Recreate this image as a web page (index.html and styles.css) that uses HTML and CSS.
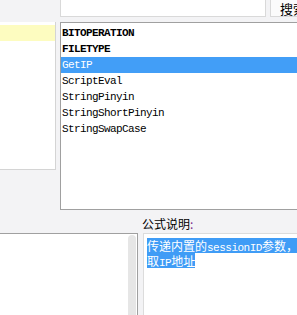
FILE: index.html
```html
<!DOCTYPE html>
<html>
<head>
<meta charset="utf-8">
<link rel="stylesheet" href="styles.css">
</head>
<body>
<div class="page">
  <div class="top">
    <div class="search-input"></div>
    <div class="search-btn">搜索</div>
  </div>
  <div class="mid">
    <div class="cat-panel">
      <div class="cat-row selected"></div>
    </div>
    <div class="func-list">
      <div class="item bold">BITOPERATION</div>
      <div class="item bold">FILETYPE</div>
      <div class="item active">GetIP</div>
      <div class="item">ScriptEval</div>
      <div class="item">StringPinyin</div>
      <div class="item">StringShortPinyin</div>
      <div class="item">StringSwapCase</div>
    </div>
  </div>
  <div class="label-row">
    <span class="label">公式说明<span class="colon">:</span></span>
  </div>
  <div class="bottom">
    <div class="editor">
      <div class="scroll-thumb"></div>
    </div>
    <div class="desc">
      <div class="sel">传递内置的<span class="mono">sessionID</span>参数，</div>
      <div class="sel">取<span class="mono">IP</span>地址</div>
    </div>
  </div>
</div>
</body>
</html>
```
FILE: styles.css
```css
html, body {
  margin: 0;
  padding: 0;
}
body {
  background: #f3f3f5;
  width: 297px;
  height: 315px;
  overflow: hidden;
  font-family: "Noto Sans CJK SC", sans-serif;
}
.page {
  display: flex;
  flex-direction: column;
  width: 297px;
  height: 315px;
  overflow: hidden;
}
.top {
  display: flex;
  height: 18px;
  margin-top: -1px;
  gap: 4px;
  padding-left: 60px;
}
.search-input {
  flex: none;
  width: 204px;
  height: 16px;
  background: #fff;
  border: 1px solid #d9d9d9;
}
.search-btn {
  flex: none;
  width: 40px;
  height: 16px;
  background: #fbfbfb;
  border: 1px solid #d9d9d9;
  padding-left: 9px;
  font-size: 13px;
  line-height: 17px;
  color: #000;
  white-space: nowrap;
  overflow: hidden;
}
.mid {
  display: flex;
  margin-top: 5px;
  gap: 4px;
  align-items: flex-start;
}
.cat-panel {
  flex: none;
  width: 56px;
  height: 148px;
  background: #fff;
  border-right: 1px solid #d4d4d4;
  border-bottom: 1px solid #d4d4d4;
  padding-top: 3px;
  box-sizing: border-box;
}
.cat-row {
  height: 16px;
}
.cat-row.selected {
  background: #fdfcc0;
}
.func-list {
  flex: none;
  width: 250px;
  height: 188px;
  box-sizing: border-box;
  background: #fff;
  border: 1px solid #a0a0a0;
  padding-top: 2px;
}
.item {
  height: 16px;
  line-height: 16px;
  padding-left: 1px;
  font-family: "Liberation Mono", monospace;
  font-size: 11px;
  letter-spacing: -0.6px;
  color: #000;
  white-space: nowrap;
}
.item.bold {
  font-weight: bold;
}
.item.active {
  background: #429ef7;
  color: #fff;
}
.label-row {
  height: 23px;
  padding-left: 142px;
  box-sizing: border-box;
}
.label {
  font-size: 12px;
  line-height: 22px;
  color: #000;
}
.colon {
  color: #7a2a8a;
}
.bottom {
  display: flex;
  gap: 5px;
  flex: 1;
}
.editor {
  flex: none;
  width: 139px;
  margin-left: -1px;
  box-sizing: border-box;
  background: #fff;
  border: 1px solid #a0a0a0;
  border-bottom: none;
  display: flex;
  justify-content: flex-end;
  padding-top: 1px;
}
.scroll-thumb {
  width: 8px;
  margin-right: 1px;
  background: #e6e6e6;
  border-radius: 4px 4px 0 0;
}
.desc {
  flex: 1;
  background: #fff;
  border: 1px solid #dcdcdc;
  border-right: none;
  border-bottom: none;
  padding: 4px 0 0 3px;
  font-size: 12px;
  white-space: nowrap;
}
.sel {
  width: fit-content;
  height: 15px;
  line-height: 15px;
  background: #3f9cf6;
  color: #fff;
  overflow: hidden;
}
.mono {
  font-family: "Liberation Mono", monospace;
  font-size: 11px;
  letter-spacing: -0.5px;
}
```
